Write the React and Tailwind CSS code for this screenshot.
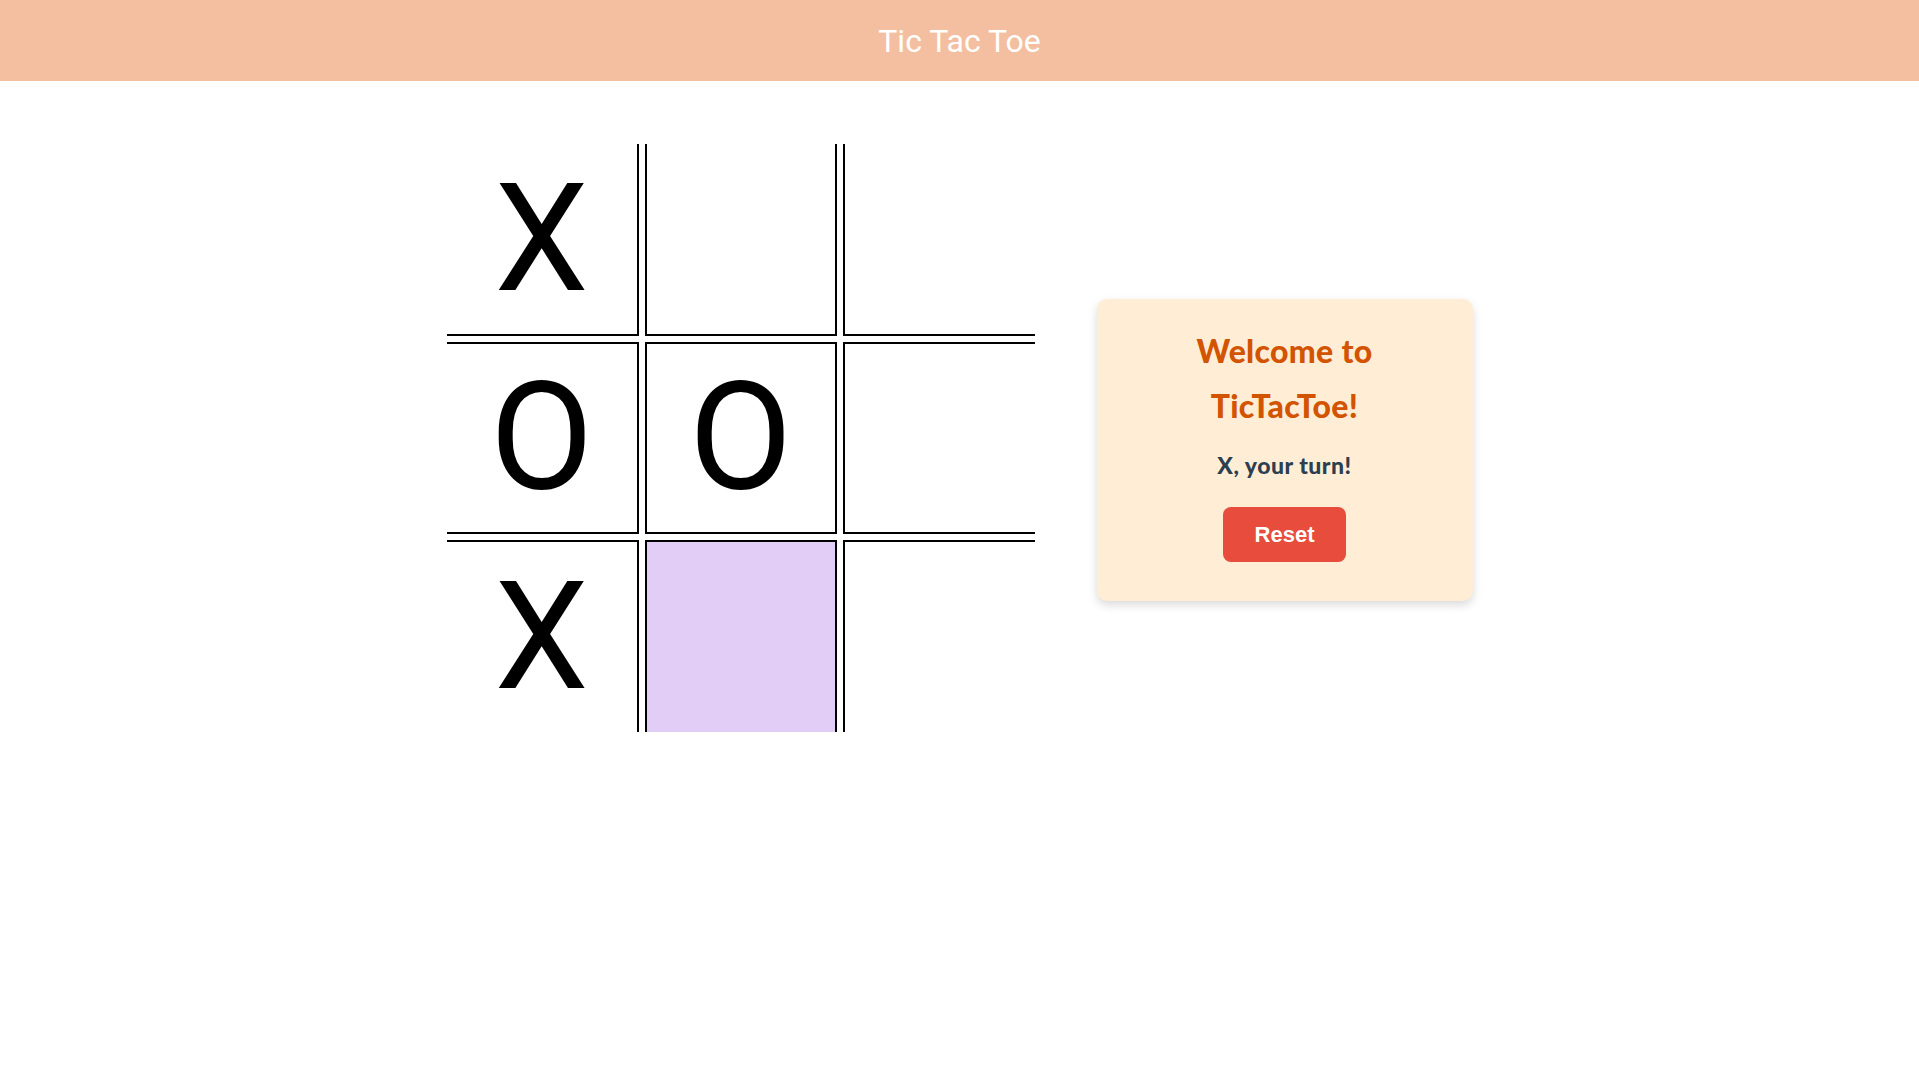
import React, { useState } from "react";

const board = ["X", "", "", "O", "O", "", "X", "", ""];

function Cell({ value, idx, hover }) {
  const row = Math.floor(idx / 3);
  const col = idx % 3;
  const edges = [
    row === 0 ? "border-t-0" : "",
    row === 2 ? "border-b-0" : "",
    col === 0 ? "border-l-0" : "",
    col === 2 ? "border-r-0" : "",
  ].join(" ");
  return (
    <div
      className={`w-[192px] h-[192px] border-2 border-black flex items-center justify-center font-[Roboto,sans-serif] text-[150px] leading-none text-black ${edges} ${
        hover ? "bg-[#e2cdf7]" : "bg-white"
      }`}
    >
      {value}
    </div>
  );
}

export default function App() {
  const [cells] = useState(board);
  return (
    <div className="min-h-screen bg-white">
      <header className="h-[81px] bg-[#f4bfa0] flex items-center justify-center text-white text-[32px] font-[Roboto,sans-serif]">
        Tic Tac Toe
      </header>

      <main className="flex justify-center items-start gap-[62px] pt-[63px]">
        <div className="grid grid-cols-[192px_192px_192px] gap-[6px]">
          {cells.map((v, i) => (
            <Cell key={i} idx={i} value={v} hover={i === 7} />
          ))}
        </div>

        <div className="mt-[155px] w-[376px] h-[302px] rounded-[10px] bg-[#ffeed5] shadow-[0_4px_10px_rgba(0,0,0,0.15)] flex flex-col items-center pt-[24px]">
          <h2 className="font-[Lato,sans-serif] text-[32px] leading-[55px] font-black tracking-[0.3px] text-[#d35400] text-center">
            Welcome to
            <br />
            TicTacToe!
          </h2>
          <p className="mt-[19px] font-[Lato,sans-serif] text-[23px] leading-[26px] font-black tracking-[0.5px] text-[#2c3e50]">
            X, your turn!
          </p>
          <button className="mt-[29px] w-[123px] h-[55px] rounded-[8px] bg-[#e74c3c] text-white text-[22px] font-bold font-['Liberation_Sans',Arial,sans-serif]">
            Reset
          </button>
        </div>
      </main>
    </div>
  );
}
